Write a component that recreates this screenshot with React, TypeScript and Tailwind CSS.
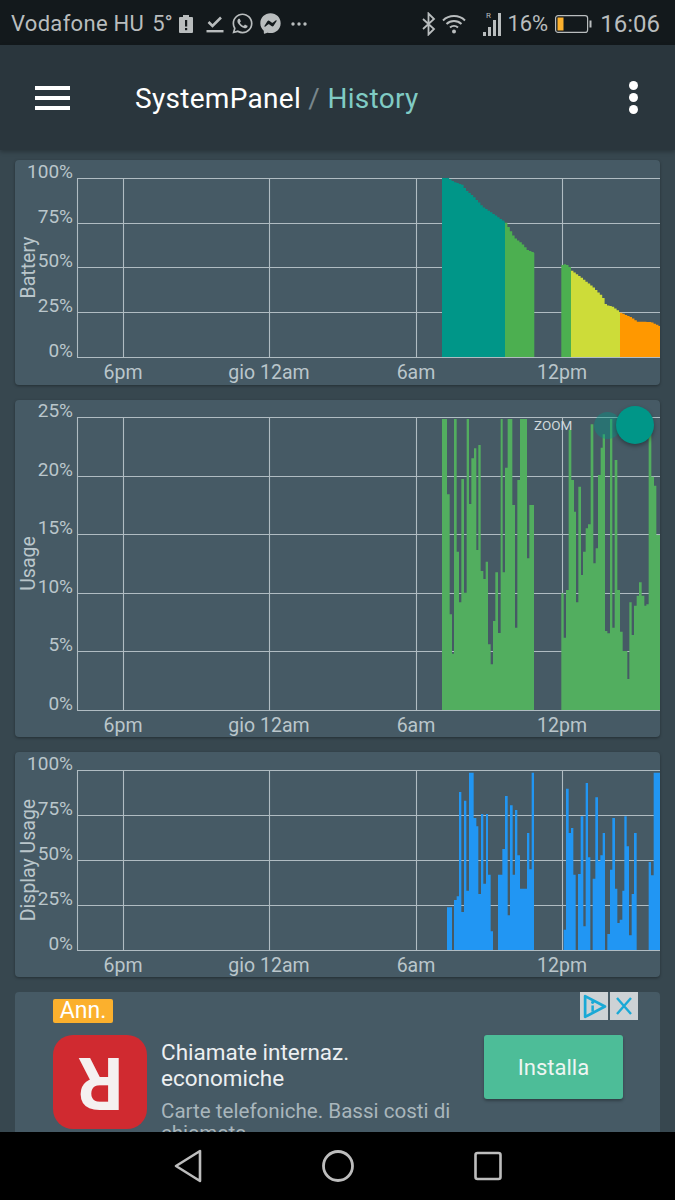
import type { ReactNode } from 'react';
import { FaWhatsapp, FaFacebookMessenger } from 'react-icons/fa';

type Step = [number, number];

// steps were read off a 3x view of the chart: [x, top] from an origin
function stepPath(steps: Step[], ox: number, oy: number, bottom: number) {
  const pts = steps.map(([x, y]) => [ox + x / 3, Math.min(oy + y / 3, bottom)]);
  let d = `M${pts[0][0]} ${bottom}`;
  for (let i = 0; i < pts.length - 1; i++) {
    d += `V${pts[i][1]}H${pts[i + 1][0]}`;
  }
  return d + `V${bottom}Z`;
}

// battery outline is a slope drawn in small stairs
function stairPath(line: Step[], bottom: number) {
  const x0 = line[0][0];
  const x1 = line[line.length - 1][0];
  let d = `M${x0} ${bottom}`;
  let x = x0;
  let seg = 0;
  while (x < x1) {
    while (seg < line.length - 2 && line[seg + 1][0] <= x) seg++;
    const [ax, ay] = line[seg];
    const [bx, by] = line[seg + 1];
    const y = ay + ((by - ay) * (x - ax)) / (bx - ax);
    const next = Math.min(x + 2.4, x1);
    d += `V${y.toFixed(1)}H${next.toFixed(1)}`;
    x = next;
  }
  return d + `V${bottom}Z`;
}

const z = (points: Step[]): Step[] => points.map(([x, y]) => [420 + x / 3, 170 + y / 3]);

const usageLeft: Step[] = [[12,12],[27,238],[35,598],[42,716],[48,12],[56,410],[63,562],[70,192],[78,533],[86,12],[93,267],[100,130],[108,100],[115,405],[121,90],[128,468],[136,492],[143,440],[150,688],[158,748],[165,618],[172,472],[180,654],[188,12],[194,472],[201,158],[209,12],[223,270],[231,638],[238,195],[246,12],[267,430],[274,270],[288,270]];
const usageRight: Step[] = [[10,535],[17,668],[24,525],[32,45],[40,195],[48,290],[54,562],[61,215],[69,480],[75,410],[83,340],[90,328],[98,28],[106,445],[113,400],[120,180],[128,98],[134,58],[141,648],[148,655],[156,12],[163,638],[170,135],[178,525],[186,650],[194,708],[208,792],[214,562],[221,660],[228,572],[236,542],[243,502],[251,542],[259,572],[265,568],[272,12],[280,185],[288,212],[295,360],[306,360]];
const displayLeft: Step[] = [[15,418],[30,560],[36,396],[44,385],[51,72],[58,432],[66,98],[73,368],[81,14],[95,150],[103,175],[109,378],[117,138],[124,347],[132,138],[138,320],[146,490],[153,560],[168,320],[181,243],[189,84],[197,442],[204,112],[212,320],[219,126],[226,262],[234,362],[255,195],[262,304],[269,14],[276,14]];
const displayRight: Step[] = [[26,485],[33,62],[41,195],[48,180],[55,320],[62,560],[69,318],[77,145],[85,475],[92,45],[99,268],[106,560],[113,332],[121,88],[129,280],[136,262],[143,195],[150,560],[157,498],[165,305],[172,150],[180,362],[187,465],[194,455],[202,368],[208,145],[215,235],[222,502],[230,378],[237,195],[245,560],[281,282],[288,322],[296,14],[315,14]];

const hours = [
  { x: 123, label: '6pm' },
  { x: 269, label: 'gio 12am' },
  { x: 416, label: '6am' },
  { x: 562, label: '12pm' },
];

type ChartProps = {
  top: number;
  height: number;
  title: string;
  ticks: { y: number; label: string }[];
  children: ReactNode;
  overlay?: ReactNode;
};

function ChartCard({ top, height, title, ticks, children, overlay }: ChartProps) {
  const last = ticks[ticks.length - 1].y;
  const first = ticks[0].y;
  return (
    <div className="relative shrink-0 rounded bg-[#465a65] shadow-[0_1px_3px_rgba(0,0,0,0.35)]">
      <svg viewBox={`15 ${top} 645 ${height}`} className="block h-auto w-full">
        {ticks.map((t) => (
          <g key={t.label}>
            <line x1={77} x2={660} y1={t.y + 0.5} y2={t.y + 0.5} stroke="#b0bcc2" strokeWidth={1.1} />
            <text x={73} y={t.y} textAnchor="end" className="fill-[#bac6cb] text-[19px]">
              {t.label}
            </text>
          </g>
        ))}
        <line x1={77.5} x2={77.5} y1={first} y2={last} stroke="#b0bcc2" strokeWidth={1.1} />
        {hours.map((h) => (
          <g key={h.label}>
            <line x1={h.x + 0.5} x2={h.x + 0.5} y1={first} y2={last} stroke="#b0bcc2" strokeWidth={1.1} />
            <text x={h.x} y={last + 22} textAnchor="middle" className="fill-[#bac6cb] text-[19.5px]">
              {h.label}
            </text>
          </g>
        ))}
        <text
          textAnchor="middle"
          transform={`translate(34.5 ${(first + last) / 2}) rotate(-90)`}
          className="fill-[#bac6cb] text-[19.5px]"
        >
          {title}
        </text>
        {children}
      </svg>
      {overlay}
    </div>
  );
}

function StatusBar() {
  return (
    <div className="flex h-[45px] shrink-0 items-center bg-[#13191c] pl-[11px] pr-[15px] pt-[2px] text-[22px] leading-none text-[#b9bdbe]">
      <span className="tracking-[0.3px]">Vodafone HU</span>
      <span className="ml-[8px]">5°</span>
      <svg viewBox="0 0 14 18" className="ml-[6px] h-[18px] w-[14px]">
        <path d="M4 0h6v2h3a1 1 0 0 1 1 1v14a1 1 0 0 1-1 1H1a1 1 0 0 1-1-1V3a1 1 0 0 1 1-1h3z" fill="#b9bdbe" />
        <rect x="6" y="5" width="2.2" height="6.5" fill="#13191c" />
        <rect x="6" y="13" width="2.2" height="2.2" fill="#13191c" />
      </svg>
      <svg viewBox="0 0 18 18" className="ml-[13px] h-[18px] w-[18px]">
        <path d="M2.5 7l4 4L15 2.5" fill="none" stroke="#b9bdbe" strokeWidth="2.6" />
        <rect x="0.5" y="15" width="17" height="2.4" fill="#b9bdbe" />
      </svg>
      <FaWhatsapp className="ml-[7px] h-[23px] w-[23px]" />
      <FaFacebookMessenger className="ml-[6px] h-[21px] w-[21px]" />
      <svg viewBox="0 0 16 4" className="ml-[10px] h-[4px] w-[16px]">
        <circle cx="2" cy="2" r="1.7" fill="#b9bdbe" />
        <circle cx="8" cy="2" r="1.7" fill="#b9bdbe" />
        <circle cx="14" cy="2" r="1.7" fill="#b9bdbe" />
      </svg>
      <div className="flex-1" />
      <svg viewBox="0 0 14 24" className="h-[24px] w-[14px]">
        <path d="M1 7l11 10-5.5 5.5V1.5L12 7 1 17" fill="none" stroke="#b9bdbe" strokeWidth="1.8" />
      </svg>
      <svg viewBox="0 0 24 20" className="ml-[6px] h-[20px] w-[24px]">
        <path d="M1 6.5a16 16 0 0 1 22 0M4.5 10a11 11 0 0 1 15 0M8 13.5a6 6 0 0 1 8 0" fill="none" stroke="#b9bdbe" strokeWidth="2" />
        <circle cx="12" cy="17.5" r="2" fill="#b9bdbe" />
      </svg>
      <svg viewBox="0 0 21 26" className="ml-[17px] h-[26px] w-[21px]">
        <text x="3" y="7" className="fill-[#b9bdbe] text-[8px]">R</text>
        <rect x="0" y="21" width="3" height="4" fill="#b9bdbe" />
        <rect x="5" y="16" width="3" height="9" fill="#b9bdbe" />
        <rect x="10" y="9" width="3" height="16" fill="#b9bdbe" />
        <rect x="15" y="2" width="3" height="23" fill="#b9bdbe" />
      </svg>
      <span className="ml-[3px]">16%</span>
      <svg viewBox="0 0 37 18" className="ml-[7px] h-[18px] w-[37px]">
        <rect x="0.6" y="0.6" width="32" height="16.8" rx="2.5" fill="none" stroke="#b9bdbe" strokeWidth="1.2" />
        <rect x="2.5" y="2.5" width="6" height="13" fill="#fbb02d" />
        <rect x="34.5" y="5.5" width="2" height="7" fill="#b9bdbe" />
      </svg>
      <span className="ml-[8px] text-[24px]">16:06</span>
    </div>
  );
}

function Toolbar() {
  return (
    <div className="relative z-10 flex h-[105px] shrink-0 items-center bg-[#2a363d] pl-[35px] pr-[37px] shadow-[0_2px_4px_rgba(0,0,0,0.25)]">
      <div className="flex h-[24px] w-[35px] flex-col justify-between">
        <div className="h-[4px] bg-white" />
        <div className="h-[4px] bg-white" />
        <div className="h-[4px] bg-white" />
      </div>
      <div className="ml-[65px] flex-1 pt-[2px] text-[28px] leading-none tracking-[0.3px]">
        <span className="text-white">SystemPanel</span>
        <span className="text-[#78868c]"> / </span>
        <span className="text-[#80cbc4]">History</span>
      </div>
      <div className="flex flex-col gap-[3px]">
        <div className="h-[9px] w-[9px] rounded-full bg-white" />
        <div className="h-[9px] w-[9px] rounded-full bg-white" />
        <div className="h-[9px] w-[9px] rounded-full bg-white" />
      </div>
    </div>
  );
}

function AdCard() {
  return (
    <div className="relative shrink-0 rounded bg-[#465a65] pb-[30px] pl-[38px] pr-[37px] pt-[7px]">
      <div className="absolute right-[22px] top-0 flex gap-[2px]">
        <div className="flex h-[28px] w-[28px] items-center justify-center bg-[#cdd2d5]">
          <svg viewBox="0 0 24 24" className="h-[25px] w-[25px]">
            <path d="M3 2l19 10L3 22z" fill="none" stroke="#1aa9d6" strokeWidth="2.6" strokeLinejoin="round" />
            <rect x="9" y="11" width="2.4" height="6" fill="#1aa9d6" />
            <circle cx="10.2" cy="8" r="1.5" fill="#1aa9d6" />
          </svg>
        </div>
        <div className="flex h-[28px] w-[28px] items-center justify-center bg-[#cdd2d5]">
          <svg viewBox="0 0 20 20" className="h-[22px] w-[20px]">
            <path d="M3 2l14 16M17 2L3 18" fill="none" stroke="#1aa9d6" strokeWidth="2.4" />
          </svg>
        </div>
      </div>
      <span className="block h-[24px] w-[60px] rounded-[2px] bg-[#fbb02d] text-center text-[23px] leading-[24px] text-white">
        Ann.
      </span>
      <div className="mt-[12px] flex items-start">
        <div className="flex h-[94px] w-[94px] shrink-0 items-center justify-center rounded-[20px] bg-[#d02a30]">
          <span className="rotate-180 text-[72px] font-bold leading-none text-[#f5f0f0]">R</span>
        </div>
        <div className="ml-[14px] w-[300px] shrink-0 pt-[4px]">
          <p className="text-[22.5px] leading-[26px] text-[#eceff1]">
            Chiamate internaz.
            <br />
            economiche
          </p>
          <p className="mt-[9px] text-[20.6px] leading-[22px] text-[#a9b6bc]">
            Carte telefoniche. Bassi costi di chiamata
          </p>
        </div>
        <div className="ml-[23px] flex h-[64px] w-[139px] shrink-0 items-center justify-center rounded-[3px] bg-[#4dbd98] text-[22px] text-[#eef5f2] shadow-[0_2px_3px_rgba(0,0,0,0.3)]">
          Installa
        </div>
      </div>
    </div>
  );
}

function NavBar() {
  return (
    <div className="relative z-10 flex h-[68px] shrink-0 items-center justify-center gap-[120px] bg-black">
      <svg viewBox="0 0 28 34" className="h-[34px] w-[28px]">
        <path d="M26 2v30L2 17z" fill="none" stroke="#bdbdbd" strokeWidth="2.6" strokeLinejoin="round" />
      </svg>
      <svg viewBox="0 0 32 34" className="h-[34px] w-[32px]">
        <ellipse cx="16" cy="17" rx="14.5" ry="14.5" fill="none" stroke="#bdbdbd" strokeWidth="2.8" />
      </svg>
      <svg viewBox="0 0 28 30" className="h-[30px] w-[28px]">
        <rect x="1.5" y="2" width="25" height="26" rx="2" fill="none" stroke="#bdbdbd" strokeWidth="2.6" />
      </svg>
    </div>
  );
}

export default function App() {
  return (
    <div className="flex h-[1200px] w-[675px] flex-col overflow-hidden bg-[#37474f] font-['Roboto',sans-serif]">
      <StatusBar />
      <Toolbar />
      <div className="flex min-h-0 flex-1 flex-col gap-[15px] overflow-hidden px-[15px] pt-[10px]">
        <ChartCard
          top={160}
          height={225}
          title="Battery"
          ticks={[
            { y: 178, label: '100%' },
            { y: 223, label: '75%' },
            { y: 267, label: '50%' },
            { y: 312, label: '25%' },
            { y: 357, label: '0%' },
          ]}
        >
          <path d={stairPath(z([[66,24],[80,24],[100,36],[125,45],[135,60],[160,82],[185,110],[210,127],[255,158]]), 357)} fill="#009688" />
          <path d={stairPath(z([[255,158],[270,185],[280,203],[300,218],[320,240],[343,250]]), 357)} fill="#4caf50" />
          <path d={stairPath(z([[424,285],[435,282],[453,298]]), 357)} fill="#4caf50" />
          <path d={stairPath(z([[453,302],[480,322],[515,350],[545,380],[555,405],[575,410],[600,428]]), 357)} fill="#cddc39" />
          <path d={stairPath(z([[600,428],[630,442],[650,455],[690,456],[720,470]]), 357)} fill="#ff9800" />
        </ChartCard>
        <ChartCard
          top={400}
          height={337}
          title="Usage"
          ticks={[
            { y: 417, label: '25%' },
            { y: 476, label: '20%' },
            { y: 534, label: '15%' },
            { y: 593, label: '10%' },
            { y: 651, label: '5%' },
            { y: 710, label: '0%' },
          ]}
          overlay={
            <>
              <span className="absolute left-[519px] top-[18px] text-[13.5px] leading-[14px] text-[#cfd8dc]">ZOOM</span>
              <div className="absolute left-[579px] top-[12px] h-[27px] w-[27px] rounded-full bg-[#009688]/40" />
              <div className="absolute left-[601px] top-[6px] h-[38px] w-[38px] rounded-full bg-[#009688] shadow-[0_2px_4px_rgba(0,0,0,0.35)]" />
            </>
          }
        >
          <path d={stepPath(usageLeft, 438, 415, 710)} fill="#52ae5f" />
          <path d={stepPath(usageRight, 558, 415, 710)} fill="#52ae5f" />
        </ChartCard>
        <ChartCard
          top={752}
          height={225}
          title="Display Usage"
          ticks={[
            { y: 770, label: '100%' },
            { y: 815, label: '75%' },
            { y: 860, label: '50%' },
            { y: 905, label: '25%' },
            { y: 950, label: '0%' },
          ]}
        >
          <path d={stepPath(displayLeft, 442, 768, 950)} fill="#2196f3" />
          <path d={stepPath(displayRight, 555, 768, 950)} fill="#2196f3" />
        </ChartCard>
        <AdCard />
      </div>
      <NavBar />
    </div>
  );
}
